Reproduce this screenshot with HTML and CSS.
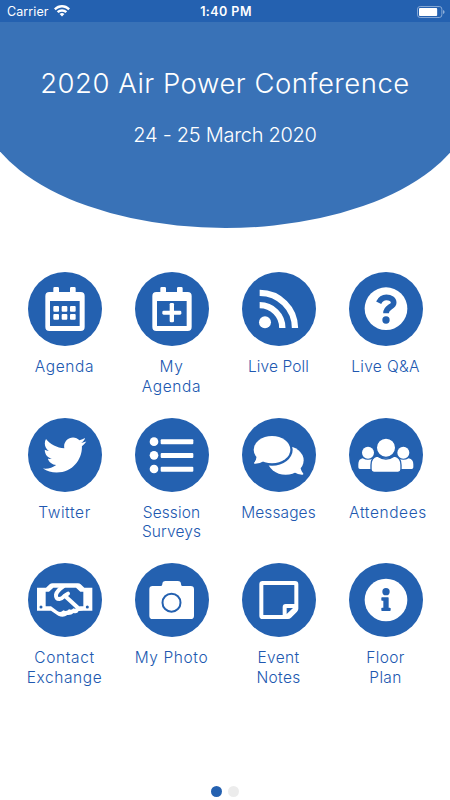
FILE: index.html
```
<!DOCTYPE html>
<html lang="en">
<head>
<meta charset="utf-8">
<title>2020 Air Power Conference</title>
<link rel="stylesheet" href="styles.css">
</head>
<body>
<div class="status">
  <div class="carrier"><span>Carrier</span>
    <svg class="wifi" viewBox="0 0 46 33"><path d="M0 10C13-3 33-3 46 10L41 15C30 5 16 5 5 15Z"/><path d="M8 18C17 10 29 10 38 18L33 23C27 18 19 18 13 23Z"/><path d="M16 26Q23 20 30 26L23 33Z"/></svg>
  </div>
  <div class="time">1:40 PM</div>
  <div class="power"><svg class="battery" viewBox="0 0 86 37"><rect x="1.5" y="1.5" width="75" height="34" rx="8" fill="none" stroke="#9db9dd" stroke-width="2.5"/><rect x="6" y="6" width="56" height="25" rx="3"/><path d="M80 12Q85 14 85 18.500T80 25Z" fill="#8fafd8"/></svg></div>
</div>
<header class="hero">
  <h1>2020 Air Power Conference</h1>
  <p>24 - 25 March 2020</p>
</header>
<main class="grid">
  <a class="tile"><svg class="icon" viewBox="0 0 222 222"><path fill-rule="evenodd" d="M76 60V49q0-4 4-4h9q4 0 4 4v11h33V49q0-4 4-4h9q4 0 4 4v11h15q12 0 12 12v93q0 12-12 12H64q-12 0-12-12V72q0-12 12-12ZM66 87v75h89V87Z"/><g><rect x="76" y="102" width="17" height="17" rx="3"/><rect x="101" y="102" width="17" height="17" rx="3"/><rect x="126" y="102" width="17" height="17" rx="3"/><rect x="76" y="126" width="17" height="17" rx="3"/><rect x="101" y="126" width="17" height="17" rx="3"/><rect x="126" y="126" width="17" height="17" rx="3"/></g></svg><span class="wide">Agenda</span></a>
  <a class="tile"><svg class="icon" viewBox="0 0 222 222"><path fill-rule="evenodd" d="M76 60V49q0-4 4-4h9q4 0 4 4v11h33V49q0-4 4-4h9q4 0 4 4v11h15q12 0 12 12v93q0 12-12 12H64q-12 0-12-12V72q0-12 12-12ZM66 87v75h89V87Z"/><rect x="82" y="116" width="57" height="12" rx="4"/><rect x="104" y="93" width="13" height="58" rx="4"/></svg><span class="wide">My<br>Agenda</span></a>
  <a class="tile"><svg class="icon" viewBox="0 0 222 222"><circle cx="69" cy="151" r="18"/><path class="line" stroke-width="19" d="M53 62.500A106 106 0 0 1 159 168M53 99.500A68 68 0 0 1 121 168"/></svg><span class="narrow">Live Poll</span></a>
  <a class="tile"><svg class="icon" viewBox="0 0 222 222"><circle cx="111" cy="110" r="64"/><path class="cut-line" stroke-width="17" d="M89 92C95 80 103 76 112 76C125 76 134 83 134 92C134 106 111 103 111 124"/><circle class="cut" cx="111" cy="144" r="11"/></svg><span>Live Q&amp;A</span></a>

  <a class="tile"><svg class="icon" viewBox="0 0 222 222"><path transform="translate(45 46) scale(.254)" d="M459.370 151.716c.325 4.548.325 9.097.325 13.645 0 138.720-105.583 298.558-298.558 298.558-59.452 0-114.680-17.219-161.137-47.106 8.447.974 16.568 1.299 25.340 1.299 49.055 0 94.213-16.568 130.274-44.832-46.132-.975-84.792-31.188-98.112-72.772 6.498.974 12.995 1.624 19.818 1.624 9.421 0 18.843-1.300 27.614-3.573-48.081-9.747-84.143-51.980-84.143-102.985v-1.299c13.969 7.797 30.214 12.670 47.431 13.319-28.264-18.843-46.781-51.005-46.781-87.391 0-19.492 5.197-37.360 14.294-52.954 51.655 63.675 129.300 105.258 216.365 109.807-1.624-7.797-2.599-15.918-2.599-24.040 0-57.828 46.782-104.934 104.934-104.934 30.213 0 57.502 12.670 76.670 33.137 23.715-4.548 46.456-13.320 66.599-25.340-7.798 24.366-24.366 44.833-46.132 57.827 21.117-2.273 41.584-8.122 60.426-16.243-14.292 20.791-32.161 39.308-52.628 54.253z"/></svg><span class="wide">Twitter</span></a>
  <a class="tile"><svg class="icon" viewBox="0 0 222 222"><circle cx="57" cy="71" r="13"/><circle cx="57" cy="112" r="13"/><circle cx="57" cy="153" r="13"/><rect x="77" y="64" width="98" height="15" rx="3"/><rect x="77" y="105" width="98" height="15" rx="3"/><rect x="77" y="146" width="98" height="15" rx="3"/></svg><span class="narrow">Session<br>Surveys</span></a>
  <a class="tile"><svg class="icon" viewBox="0 0 222 222"><ellipse cx="131" cy="127" rx="54" ry="43"/><path d="M175 149Q179 162 184 167Q184 171 180 170Q168 170 155 162Z"/><ellipse class="cut" cx="90" cy="95" rx="62" ry="48"/><ellipse cx="90" cy="95" rx="55" ry="41"/><path d="M44 115Q43 128 36 134Q35 138 40 137Q54 137 66 129Z"/></svg><span class="narrow">Messages</span></a>
  <a class="tile"><svg class="icon" viewBox="0 0 222 222"><circle cx="57" cy="104" r="18"/><circle cx="163" cy="104" r="18"/><path d="M28 139Q28 123 41 121Q57 130 73 121H148Q163 130 179 121Q193 124 193 139V148Q193 153 188 153H33Q28 153 28 148Z"/><path class="person" d="M66 141Q66 118 84 114Q111 132 137 114Q156 118 156 141V154Q156 163 147 163H75Q66 163 66 154Z"/><circle class="person" cx="111" cy="89" r="29"/></svg><span class="attendees">Attendees</span></a>

  <a class="tile"><svg class="icon" viewBox="0 0 222 222"><path d="M27 74H54L65 64Q68 61 74 61H150Q155 61 158 64L169 74H193V143H167L152 144Q148 153 137 150Q130 157 118 156Q106 165 91 158L69 143H27Z"/><path class="cut" d="M53 86H63L76 74H144L157 86H166V130H155L147 132Q144 140 136 136Q132 143 123 139Q116 147 106 142Q98 151 88 144L69 130H53Z"/><path class="line" stroke-width="12" stroke-linecap="round" stroke-linejoin="round" d="M107 69Q87 83 84 95Q83 108 94 108Q102 107 109 99L120 92M112 100L148 133"/><circle class="cut" cx="39" cy="132" r="4.500"/><circle class="cut" cx="178" cy="132" r="4.500"/></svg><span class="wide">Contact<br>Exchange</span></a>
  <a class="tile"><svg class="icon" viewBox="0 0 222 222"><path d="M53 69H78Q82 69 82 63Q82 54 92 54H128Q138 54 138 63Q138 69 142 69H167Q177 69 177 79V158Q177 168 167 168H53Q43 168 43 158V79Q43 69 53 69Z"/><circle class="cut-line" stroke-width="6" cx="109.500" cy="119" r="27"/></svg><span class="wide">My Photo</span></a>
  <a class="tile"><svg class="icon" viewBox="0 0 222 222"><path fill-rule="evenodd" d="M62 54H159Q169 54 169 64V137Q169 142 165 146L147 164Q143 168 138 168H62Q52 168 52 158V64Q52 54 62 54ZM65 66Q64 66 64 67V155Q64 156 65 156H122V132Q122 123 131 123H157V67Q157 66 156 66ZM134 135V153L153 135Z"/></svg><span>Event<br>Notes</span></a>
  <a class="tile"><svg class="icon" viewBox="0 0 222 222"><circle cx="111" cy="111" r="64"/><circle class="cut" cx="111" cy="86" r="11"/><path class="cut" d="M99 103H117Q119 103 119 105V134H122Q125 134 125 136V142Q125 144 122 144H99Q97 144 97 142V136Q97 134 99 134H103V113H99Q97 113 97 111V105Q97 103 99 103Z"/></svg><span>Floor<br>Plan</span></a>
</main>
<nav class="pager"><i class="dot on"></i><i class="dot"></i></nav>
</body>
</html>
```
FILE: styles.css
```
* { box-sizing: border-box; }
body {
  margin: 0;
  height: 800px;
  overflow: hidden;
  display: flex;
  flex-direction: column;
  background: #fff;
  color: #2058b0;
  font-family: Inter, "Liberation Sans", sans-serif;
}
.status {
  flex: none;
  height: 22px;
  padding: 1px 5px 0 7px;
  display: grid;
  grid-template-columns: 1fr auto 1fr;
  align-items: center;
  background: #2461b0;
  color: #fff;
  fill: #fff;
  font-size: 12.5px;
}
.carrier { display: flex; align-items: center; gap: 5px; letter-spacing: .1px; }
.wifi { width: 16px; height: 11.5px; margin-top: -1px; }
.time { font-weight: 600; letter-spacing: .45px; }
.power { display: flex; justify-content: flex-end; }
.battery { width: 28px; height: 12px; }
.hero {
  flex: none;
  height: 206px;
  position: relative;
  z-index: 0;
  overflow: hidden;
  color: #fff;
  text-align: center;
  padding-top: 43px;
}
.hero::before {
  content: "";
  position: absolute;
  z-index: -1;
  top: 0;
  bottom: 0;
  left: -22.5px;
  right: -22.5px;
  background: #3972b7;
  border-radius: 0 0 50% 50% / 0 0 130px 130px;
}
h1 { margin: 0; font-size: 27.5px; line-height: 36px; font-weight: 300; letter-spacing: .52px; white-space: nowrap; }
.hero p { margin: 21px 0 0; font-size: 20px; line-height: 26px; font-weight: 300; letter-spacing: -.28px; }
.grid {
  flex: 1;
  padding: 44px 11px 0;
  display: grid;
  grid-template-columns: repeat(4, 107px);
  grid-template-rows: repeat(3, 145.500px);
}
.tile { display: flex; flex-direction: column; align-items: center; text-align: center; white-space: nowrap; }
.tile span { margin-top: 11px; font-size: 15.500px; line-height: 19.600px; font-weight: 300; letter-spacing: .35px; }
.tile .wide { letter-spacing: .6px; }
.tile .narrow { letter-spacing: .1px; }
.tile .attendees { letter-spacing: .6px; margin-left: 5px; }
.icon { width: 74px; height: 74px; flex: none; border-radius: 50%; background: #2461b0; fill: #fff; }
.icon .cut { fill: #2461b0; }
.icon .line { fill: none; stroke: #fff; }
.icon .cut-line { fill: none; stroke: #2461b0; }
.icon .person { stroke: #2461b0; stroke-width: 4; }
.pager { flex: none; height: 14px; display: flex; justify-content: center; gap: 6px; }
.dot { width: 11px; height: 11px; border-radius: 50%; background: #ececec; }
.dot.on { background: #2461b0; }
```
